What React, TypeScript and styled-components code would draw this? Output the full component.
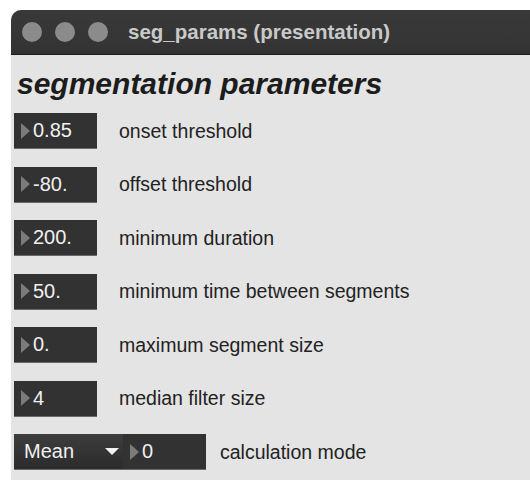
import styled, { createGlobalStyle } from "styled-components";

const GlobalStyle = createGlobalStyle`
  html, body {
    margin: 0;
    padding: 0;
    background: #ffffff;
  }
  body {
    font-family: "Liberation Sans", Arial, Helvetica, sans-serif;
  }
`;

const params = [
  { value: "0.85", label: "onset threshold" },
  { value: "-80.", label: "offset threshold" },
  { value: "200.", label: "minimum duration" },
  { value: "50.", label: "minimum time between segments" },
  { value: "0.", label: "maximum segment size" },
  { value: "4", label: "median filter size" },
];

const App = () => {
  return (
    <>
      <GlobalStyle />
      <Window>
        <TitleBar>
          <Lights>
            <Light />
            <Light />
            <Light />
          </Lights>
          <Title>seg_params (presentation)</Title>
        </TitleBar>
        <Content>
          <Heading>segmentation parameters</Heading>
          <Rows>
            {params.map((p) => (
              <Row key={p.label}>
                <NumBox>
                  <Arrow />
                  {p.value}
                </NumBox>
                <Label>{p.label}</Label>
              </Row>
            ))}
            <Row>
              <Menu>
                Mean
                <MenuCaret />
              </Menu>
              <NumBox>
                <Arrow />0
              </NumBox>
              <Label $tight>calculation mode</Label>
            </Row>
          </Rows>
        </Content>
      </Window>
    </>
  );
};

const Window = styled.div`
  margin: 10px 0 0 11px;
  height: 470px;
  display: flex;
  flex-direction: column;
  border-top-left-radius: 10px;
  overflow: hidden;
  background: #e4e4e4;
`;

const TitleBar = styled.div`
  height: 44px;
  flex: none;
  display: flex;
  align-items: center;
  background: linear-gradient(#393939, #333333);
  border-bottom: 1px solid #1c1c1c;
  padding-left: 11px;
`;

const Lights = styled.div`
  display: flex;
  gap: 13px;
`;

const Light = styled.span`
  width: 20px;
  height: 20px;
  border-radius: 50%;
  background: #8b8b8b;
`;

const Title = styled.div`
  margin-left: 20px;
  font-size: 20.5px;
  font-weight: bold;
  color: #c9c9c9;
`;

const Content = styled.div`
  flex: 1;
  padding: 0 0 0 3px;
`;

const Heading = styled.h1`
  margin: 9px 0 0 3px;
  height: 49px;
  font-size: 30px;
  font-weight: bold;
  font-style: italic;
  color: #1c1c1c;
  line-height: 40px;
`;

const Rows = styled.div`
  display: flex;
  flex-direction: column;
  gap: 17.5px;
`;

const Row = styled.div`
  display: flex;
  align-items: center;
  height: 36px;
`;

const NumBox = styled.div`
  box-sizing: border-box;
  width: 83px;
  height: 36px;
  display: flex;
  align-items: center;
  background: #323232;
  border-bottom: 1px solid #6a6a6a;
  color: #f0f0f0;
  font-size: 20px;
  padding-left: 7px;
`;

const Arrow = styled.span`
  width: 0;
  height: 0;
  border-top: 8px solid transparent;
  border-bottom: 8px solid transparent;
  border-left: 9px solid #7b7b7b;
  margin-right: 3px;
`;

const Menu = styled.div`
  box-sizing: border-box;
  width: 109px;
  height: 36px;
  display: flex;
  align-items: center;
  justify-content: space-between;
  background: linear-gradient(#3d3d3d, #2b2b2b);
  border-bottom: 1px solid #6a6a6a;
  color: #f0f0f0;
  font-size: 20px;
  padding: 0 4px 0 10px;
`;

const MenuCaret = styled.span`
  width: 0;
  height: 0;
  border-left: 7px solid transparent;
  border-right: 7px solid transparent;
  border-top: 7px solid #f2f2f2;
`;

const Label = styled.div<{ $tight?: boolean }>`
  margin-left: ${(p) => (p.$tight ? "14px" : "22px")};
  font-size: 19.5px;
  color: #222222;
`;

export default App;
